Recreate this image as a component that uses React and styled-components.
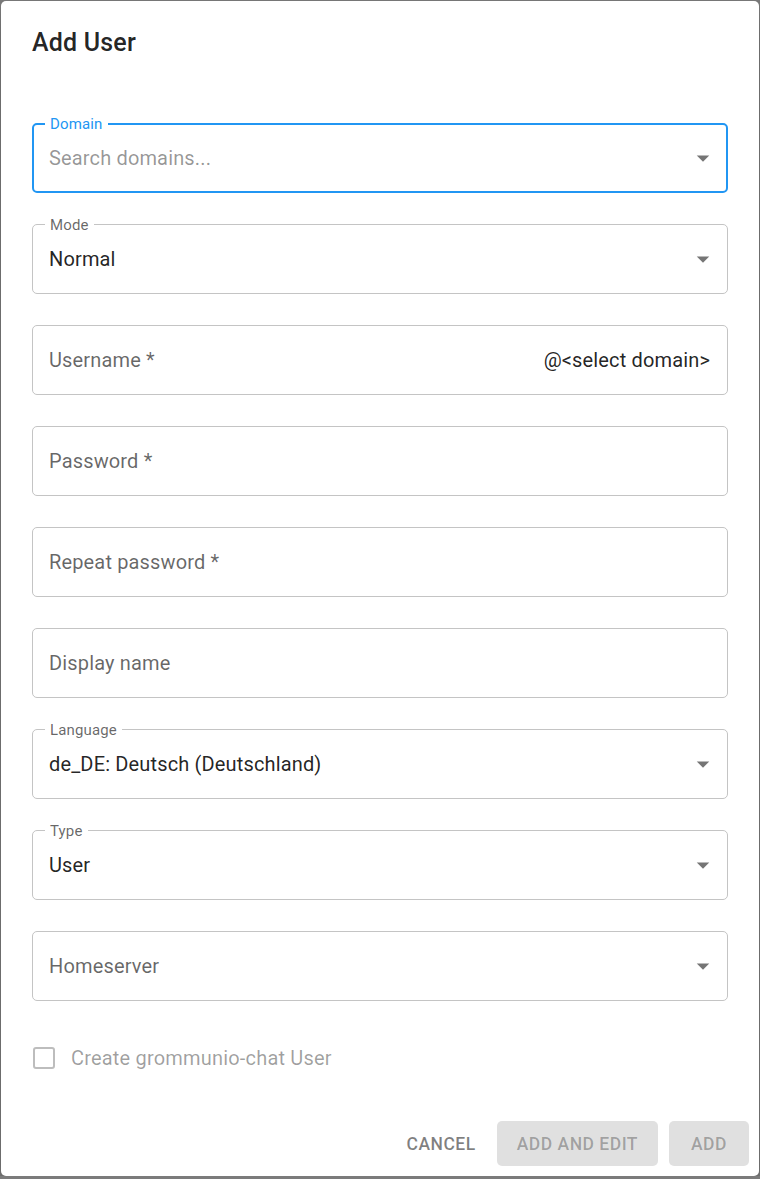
import React from 'react';
import styled, { createGlobalStyle } from 'styled-components';

const Global = createGlobalStyle`
  html, body {
    margin: 0;
    padding: 0;
    background: #7b7b7b;
    font-family: Roboto, "Liberation Sans", sans-serif;
  }
`;

const Paper = styled.div`
  box-sizing: border-box;
  margin: 1px 1px 0 1px;
  width: 758px;
  height: 1175px;
  background: #fff;
  border-radius: 5px;
  box-shadow: 0 14px 28px rgba(0, 0, 0, 0.25);
  display: flex;
  flex-direction: column;
`;

const Title = styled.h2`
  margin: 0;
  padding: 22px 31px 18px;
  font-size: 25px;
  font-weight: 500;
  line-height: 40px;
  letter-spacing: 0.0075em;
  color: rgba(0, 0, 0, 0.87);
`;

const Content = styled.div`
  padding: 42px 31px 0 31px;
  display: flex;
  flex-direction: column;
  gap: 31px;
`;

const Box = styled.div`
  position: relative;
  box-sizing: border-box;
  height: 70px;
  border: ${p => (p.$focused ? '2px solid #2196f3' : '1px solid #c4c4c4')};
  border-radius: 5px;
  display: flex;
  align-items: center;
  padding: ${p => (p.$focused ? '0 8px 0 15px' : '0 9px 0 16px')};
  letter-spacing: 0.00938em;
`;

const Label = styled.span`
  position: absolute;
  top: ${p => (p.$focused ? '-10px' : '-9px')};
  left: ${p => (p.$focused ? '11px' : '12px')};
  padding: 0 5px;
  background: #fff;
  font-size: 15px;
  line-height: 18px;
  color: ${p => (p.$focused ? '#2196f3' : 'rgba(0, 0, 0, 0.6)')};
`;

const Text = styled.span`
  flex: 1;
  font-size: 20px;
  line-height: 24px;
  color: ${p =>
    p.$tone === 'placeholder'
      ? 'rgba(0, 0, 0, 0.42)'
      : p.$tone === 'label'
      ? 'rgba(0, 0, 0, 0.6)'
      : 'rgba(0, 0, 0, 0.87)'};
`;

const Adornment = styled.span`
  font-size: 20px;
  line-height: 24px;
  color: rgba(0, 0, 0, 0.87);
  padding-right: 8px;
`;

const Arrow = styled.svg`
  width: 30px;
  height: 30px;
  fill: rgba(0, 0, 0, 0.54);
  flex-shrink: 0;
`;

const CheckRow = styled.label`
  display: flex;
  align-items: center;
  gap: 16px;
  margin: 45px 31px 0;
  padding-left: 1px;
`;

const CheckBox = styled.span`
  box-sizing: border-box;
  width: 22px;
  height: 22px;
  border: 2px solid #bdbdbd;
  border-radius: 3px;
`;

const CheckText = styled.span`
  font-size: 20px;
  line-height: 24px;
  letter-spacing: 0.00938em;
  color: rgba(0, 0, 0, 0.38);
`;

const Actions = styled.div`
  margin-top: auto;
  padding: 0 10px 10px 10px;
  display: flex;
  justify-content: flex-end;
  gap: 11px;
`;

const Button = styled.button`
  height: 45px;
  border: none;
  border-radius: 5px;
  padding: 0 ${p => (p.$text ? '10px' : '20px')};
  min-width: ${p => (p.$text ? '89px' : '80px')};
  background: ${p => (p.$text ? 'transparent' : 'rgba(0, 0, 0, 0.12)')};
  color: ${p => (p.$text ? 'rgba(0, 0, 0, 0.5)' : 'rgba(0, 0, 0, 0.3)')};
  font-family: Roboto, "Liberation Sans", sans-serif;
  font-size: 17.5px;
  font-weight: 500;
  letter-spacing: 0.5px;
  text-transform: uppercase;
`;

const DropArrow = () => (
  <Arrow viewBox="0 0 24 24">
    <path d="M7 10l5 5 5-5z" />
  </Arrow>
);

const Field = ({ label, value, tone, focused, select, adornment }) => (
  <Box $focused={focused}>
    {label && <Label $focused={focused}>{label}</Label>}
    <Text $tone={tone}>{value}</Text>
    {adornment && <Adornment>{adornment}</Adornment>}
    {select && <DropArrow />}
  </Box>
);

export default function App() {
  return (
    <>
      <Global />
      <Paper>
        <Title>Add User</Title>
        <Content>
          <Field label="Domain" value="Search domains..." tone="placeholder" focused select />
          <Field label="Mode" value="Normal" select />
          <Field value="Username *" tone="label" adornment="@<select domain>" />
          <Field value="Password *" tone="label" />
          <Field value="Repeat password *" tone="label" />
          <Field value="Display name" tone="label" />
          <Field label="Language" value="de_DE: Deutsch (Deutschland)" select />
          <Field label="Type" value="User" select />
          <Field value="Homeserver" tone="label" select />
        </Content>
        <CheckRow>
          <CheckBox />
          <CheckText>Create grommunio-chat User</CheckText>
        </CheckRow>
        <Actions>
          <Button $text>Cancel</Button>
          <Button disabled>Add and edit</Button>
          <Button disabled>Add</Button>
        </Actions>
      </Paper>
    </>
  );
}
